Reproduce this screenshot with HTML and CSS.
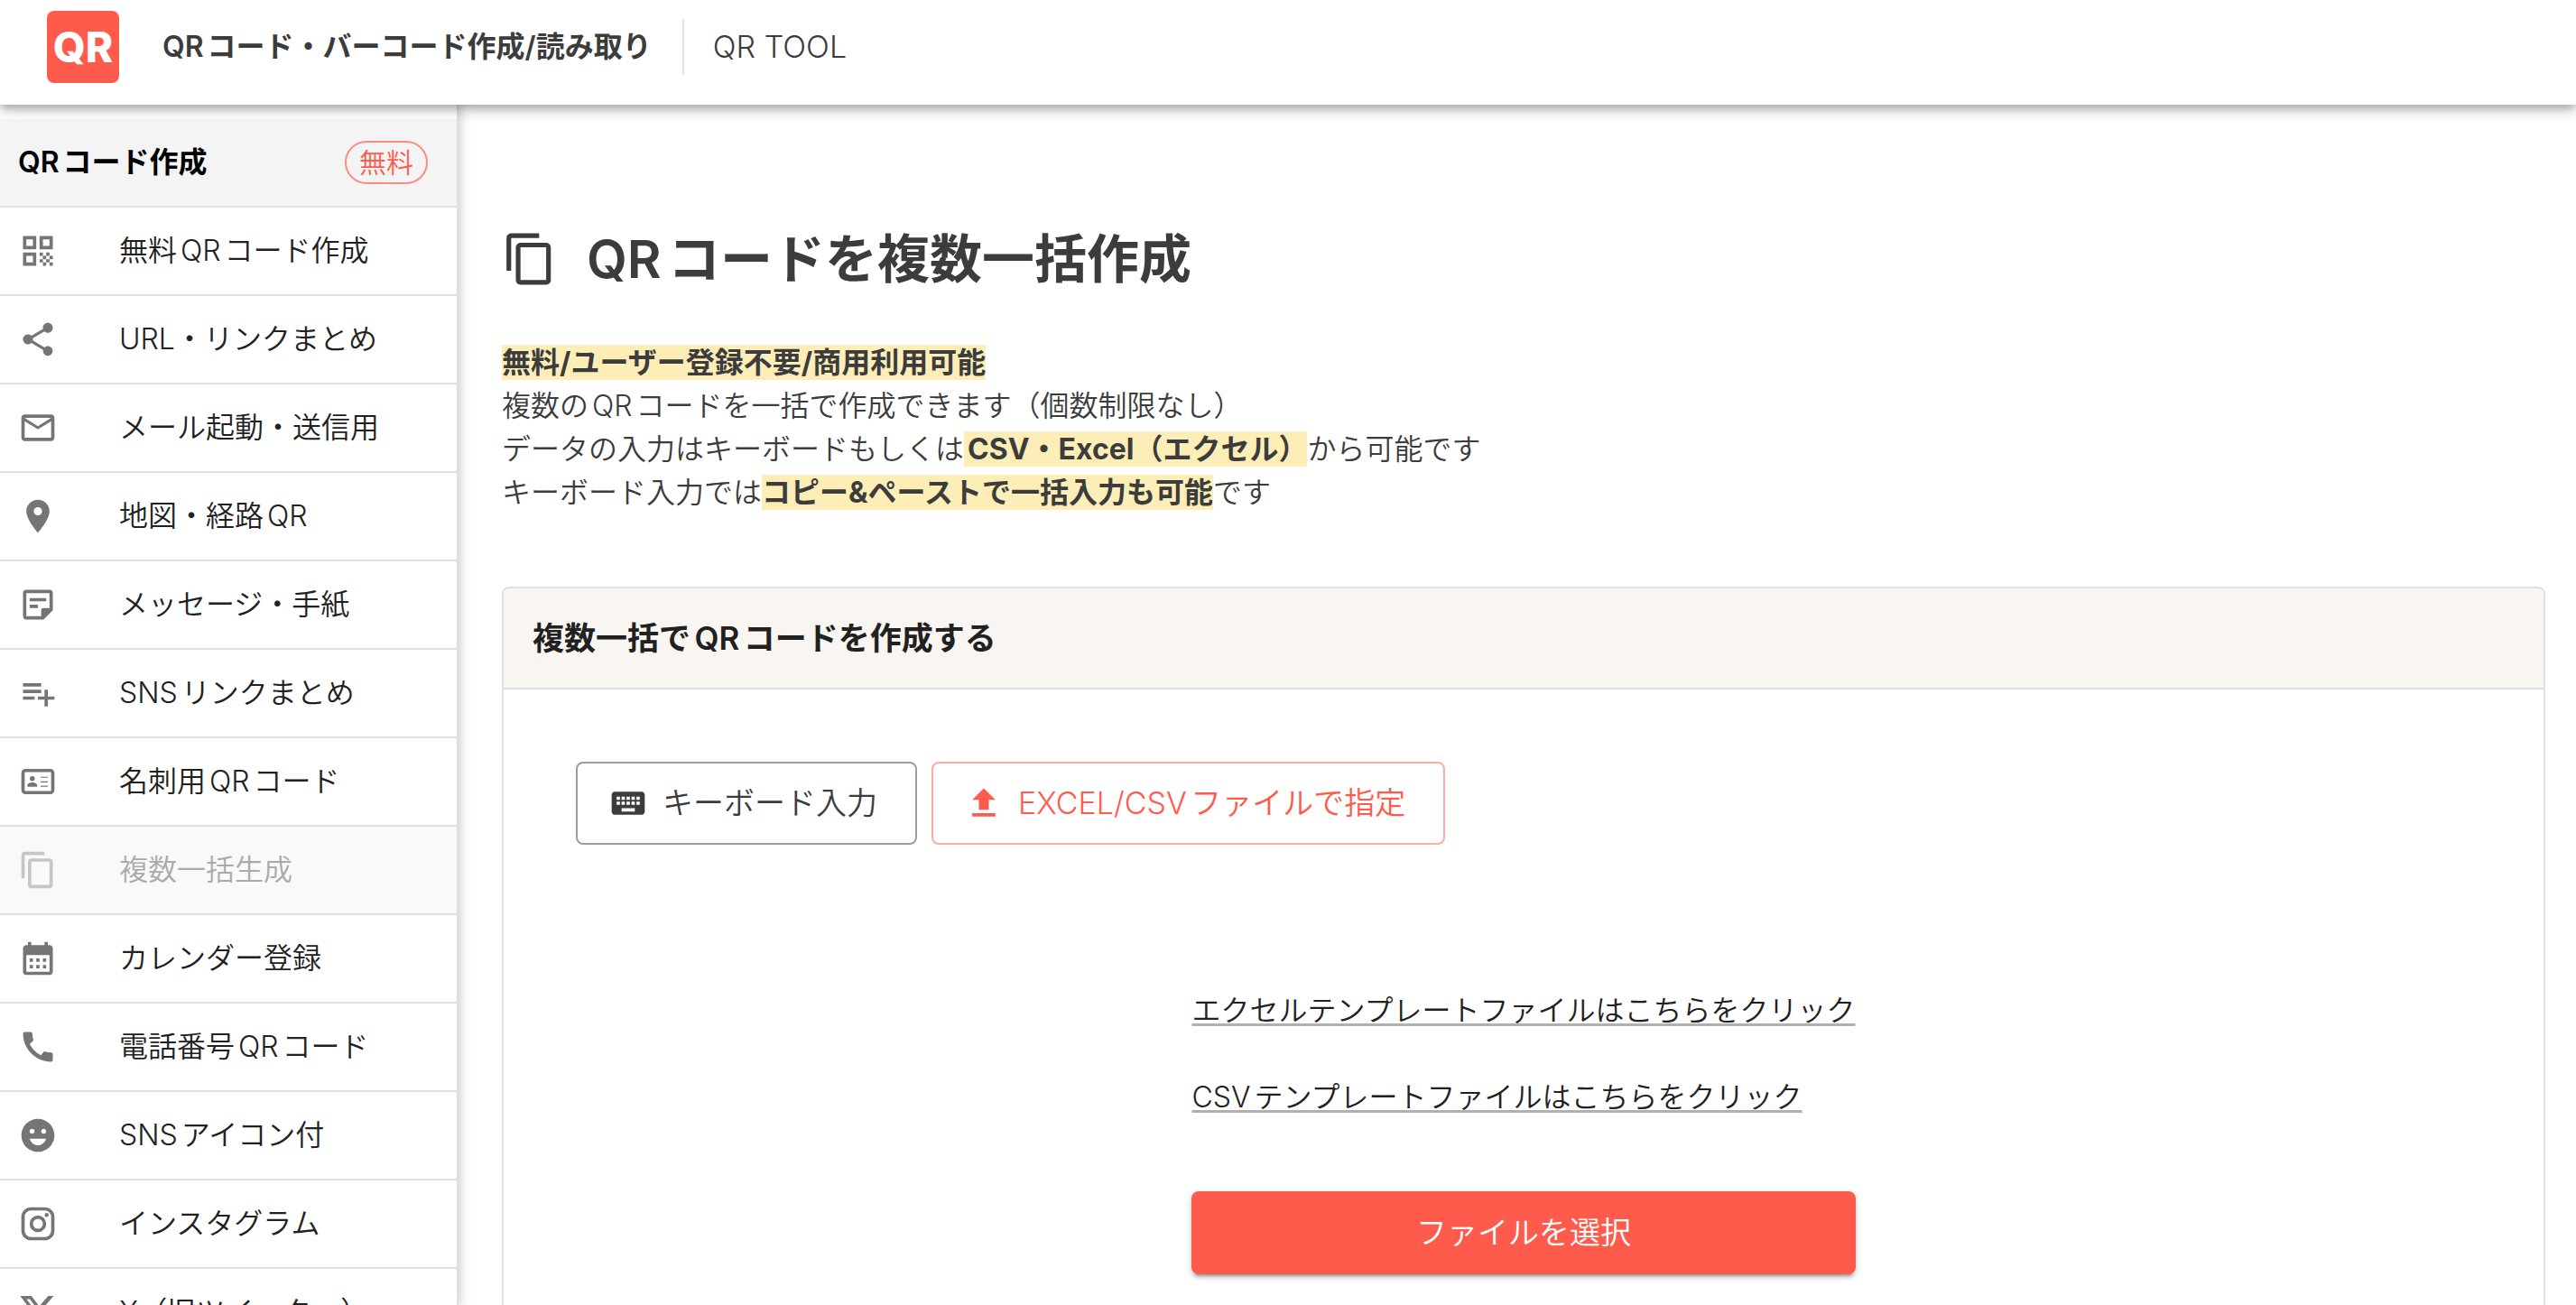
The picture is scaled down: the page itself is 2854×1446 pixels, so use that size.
FILE: index.html
```html
<!DOCTYPE html>
<html lang="ja">
<head>
  <meta charset="UTF-8">
  <meta name="viewport" content="width=device-width, initial-scale=1.0">
  <title>QRコードを複数一括作成 | QR TOOL</title>
  <link rel="stylesheet" href="styles.css">
</head>
<body>
  <header class="header">
    <a class="logo" href="#">QR</a>
    <a class="site-name" href="#">QRコード・バーコード作成/読み取り</a>
    <span class="site-sub">QR TOOL</span>
  </header>

  <div class="layout">
    <nav class="sidebar">
      <div class="sidebar-head">
        <span>QRコード作成</span>
        <span class="chip">無料</span>
      </div>
      <a class="nav-item" href="#">
        <svg class="icon" viewBox="0 0 24 24"><path d="M3 11h8V3H3v8zm2-6h4v4H5V5zM3 21h8v-8H3v8zm2-6h4v4H5v-4zM13 3v8h8V3h-8zm6 6h-4V5h4v4zM19 19h2v2h-2zM13 13h2v2h-2zM15 15h2v2h-2zM13 17h2v2h-2zM15 19h2v2h-2zM17 17h2v2h-2zM17 13h2v2h-2zM19 15h2v2h-2z"/></svg>
        無料QRコード作成
      </a>
      <a class="nav-item" href="#">
        <svg class="icon" viewBox="0 0 24 24"><path d="M18 16.08c-.76 0-1.44.3-1.96.77L8.91 12.7c.05-.23.09-.46.09-.7s-.04-.47-.09-.7l7.05-4.11c.54.5 1.25.81 2.04.81 1.66 0 3-1.34 3-3s-1.34-3-3-3-3 1.34-3 3c0 .24.04.47.09.7L8.04 9.81C7.5 9.31 6.79 9 6 9c-1.66 0-3 1.34-3 3s1.34 3 3 3c.79 0 1.5-.31 2.04-.81l7.12 4.16c-.05.21-.08.43-.08.65 0 1.61 1.31 2.92 2.92 2.92s2.92-1.31 2.92-2.92-1.31-2.92-2.92-2.92z"/></svg>
        URL・リンクまとめ
      </a>
      <a class="nav-item" href="#">
        <svg class="icon" viewBox="0 0 24 24"><path d="M20 4H4c-1.1 0-1.99.9-1.99 2L2 18c0 1.1.9 2 2 2h16c1.1 0 2-.9 2-2V6c0-1.1-.9-2-2-2zm0 14H4V8l8 5 8-5v10zm-8-7L4 6h16l-8 5z"/></svg>
        メール起動・送信用
      </a>
      <a class="nav-item" href="#">
        <svg class="icon" viewBox="0 0 24 24"><path d="M12 2C8.13 2 5 5.13 5 9c0 5.25 7 13 7 13s7-7.75 7-13c0-3.87-3.13-7-7-7zm0 9.5c-1.38 0-2.5-1.12-2.5-2.5s1.12-2.5 2.5-2.5 2.5 1.12 2.5 2.5-1.12 2.5-2.5 2.5z"/></svg>
        地図・経路QR
      </a>
      <a class="nav-item" href="#">
        <svg class="icon" viewBox="0 0 24 24"><path fill-rule="evenodd" d="M19 3H5a2 2 0 0 0-2 2v14a2 2 0 0 0 2 2h10.400L21 15.400V5a2 2 0 0 0-2-2zM5 19V5h14v9h-4a1 1 0 0 0-1 1v4H5zM7 8h10v2H7zM7 12h5v2H7z"/></svg>
        メッセージ・手紙
      </a>
      <a class="nav-item" href="#">
        <svg class="icon" viewBox="0 0 24 24"><path d="M14 10H3v2h11v-2zm0-4H3v2h11V6zm4 8v-4h-2v4h-4v2h4v4h2v-4h4v-2h-4zM3 16h7v-2H3v2z"/></svg>
        SNSリンクまとめ
      </a>
      <a class="nav-item" href="#">
        <svg class="icon" viewBox="0 0 24 24"><rect x="3" y="5.300" width="18" height="13.400" rx="1.500" fill="none" stroke="currentColor" stroke-width="2"/><circle cx="8.600" cy="10.200" r="1.500"/><path d="M5.600 15.200v-.8c0-1.200 1.500-1.900 3-1.900s3 .7 3 1.900v.8zM13.600 9.100h4.400v.6h-4.400zM13.600 11.900h4.400v.6h-4.400zM13.600 14.500h4.400v.6h-4.400z"/></svg>
        名刺用QRコード
      </a>
      <a class="nav-item is-current" href="#" aria-current="page">
        <svg class="icon" viewBox="0 0 24 24"><path d="M16 1H4c-1.100 0-2 .9-2 2v14h2V3h12V1zm3 4H8c-1.100 0-2 .9-2 2v14c0 1.100.9 2 2 2h11c1.100 0 2-.9 2-2V7c0-1.100-.9-2-2-2zm0 16H8V7h11v14z"/></svg>
        複数一括生成
      </a>
      <a class="nav-item" href="#">
        <svg class="icon" viewBox="0 0 24 24"><path d="M19 4h-1V2h-2v2H8V2H6v2H5c-1.110 0-1.990.9-1.990 2L3 20c0 1.100.89 2 2 2h14c1.100 0 2-.9 2-2V6c0-1.100-.9-2-2-2zm0 16H5V10h14v10zM9 14H7v-2h2v2zm4 0h-2v-2h2v2zm4 0h-2v-2h2v2zm-8 4H7v-2h2v2zm4 0h-2v-2h2v2zm4 0h-2v-2h2v2z"/></svg>
        カレンダー登録
      </a>
      <a class="nav-item" href="#">
        <svg class="icon" viewBox="0 0 24 24"><path d="M20.010 15.380c-1.230 0-2.420-.2-3.530-.56-.35-.12-.74-.03-1.010.24l-1.570 1.970c-2.830-1.350-5.480-3.900-6.890-6.830l1.950-1.660c.27-.28.35-.67.24-1.020-.37-1.110-.56-2.300-.56-3.530 0-.54-.45-.99-.99-.99H4.190C3.650 3 3 3.240 3 3.990 3 13.280 10.730 21 20.010 21c.71 0 .99-.63.99-1.180v-3.450c0-.54-.45-.99-.99-.99z"/></svg>
        電話番号QRコード
      </a>
      <a class="nav-item" href="#">
        <svg class="icon" viewBox="0 0 24 24"><path d="M11.990 2C6.470 2 2 6.480 2 12s4.470 10 9.990 10C17.520 22 22 17.520 22 12S17.520 2 11.990 2zM8.500 8c.83 0 1.500.67 1.500 1.500S9.330 11 8.500 11 7 10.330 7 9.500 7.670 8 8.500 8zM12 18c-2.280 0-4.220-1.660-5-4h10c-.78 2.340-2.720 4-5 4zm3.500-7c-.83 0-1.500-.67-1.500-1.500S14.670 8 15.500 8s1.500.67 1.500 1.500-.67 1.500-1.500 1.500z"/></svg>
        SNSアイコン付
      </a>
      <a class="nav-item" href="#">
        <svg class="icon" viewBox="0 0 24 24"><rect x="3" y="3" width="18" height="18" rx="4.800" fill="none" stroke="currentColor" stroke-width="2"/><circle cx="12" cy="12" r="4" fill="none" stroke="currentColor" stroke-width="2"/><circle cx="17.300" cy="6.700" r="1.200"/></svg>
        インスタグラム
      </a>
      <a class="nav-item" href="#">
        <svg class="icon" viewBox="0 0 24 24"><path d="M18.200 2.200h3.300l-7.200 8.300 8.500 11.200h-6.700l-5.200-6.800-6 6.800H1.700l7.700-8.800L1.300 2.200h6.800l4.700 6.200zM17 19.800h1.800L7.100 4.100h-2z"/></svg>
        X（旧ツイッター）
      </a>
    </nav>

    <main class="main">
      <h1 class="page-title">
        <svg class="icon-large" viewBox="0 0 24 24"><path d="M16 1H4c-1.100 0-2 .9-2 2v14h2V3h12V1zm3 4H8c-1.100 0-2 .9-2 2v14c0 1.100.9 2 2 2h11c1.100 0 2-.9 2-2V7c0-1.100-.9-2-2-2zm0 16H8V7h11v14z"/></svg>
        QRコードを複数一括作成
      </h1>
      <p class="lead">
        <strong>無料/ユーザー登録不要/商用利用可能</strong><br>
        複数のQRコードを一括で作成できます（個数制限なし）<br>
        データの入力はキーボードもしくは<strong>CSV・Excel（エクセル）</strong>から可能です<br>
        キーボード入力では<strong>コピー&amp;ペーストで一括入力も可能</strong>です
      </p>

      <section class="card">
        <h2 class="card-title">複数一括でQRコードを作成する</h2>
        <div class="card-body">
          <div class="input-types">
            <button class="btn" type="button">
              <svg class="icon" viewBox="0 0 24 24"><path d="M20 5H4c-1.100 0-1.990.9-1.990 2L2 17c0 1.100.9 2 2 2h16c1.100 0 2-.9 2-2V7c0-1.100-.9-2-2-2zm-9 3h2v2h-2V8zm0 3h2v2h-2v-2zM8 8h2v2H8V8zm0 3h2v2H8v-2zm-1 2H5v-2h2v2zm0-3H5V8h2v2zm9 7H8v-2h8v2zm0-4h-2v-2h2v2zm0-3h-2V8h2v2zm3 3h-2v-2h2v2zm0-3h-2V8h2v2z"/></svg>
              キーボード入力
            </button>
            <button class="btn btn-primary" type="button">
              <svg class="icon" viewBox="0 0 24 24"><path d="M9 16h6v-6h4l-7-7-7 7h4zm-4 2h14v2H5z"/></svg>
              EXCEL/CSVファイルで指定
            </button>
          </div>
          <div class="upload">
            <a class="template-link" href="#">エクセルテンプレートファイルはこちらをクリック</a>
            <a class="template-link" href="#">CSVテンプレートファイルはこちらをクリック</a>
            <button class="btn-upload" type="button">ファイルを選択</button>
          </div>
        </div>
      </section>
    </main>
  </div>
</body>
</html>
```
FILE: styles.css
```css
* {
  box-sizing: border-box;
}
body {
  display: flex;
  flex-direction: column;
  height: 100vh;
  margin: 0;
  overflow: hidden;
  font-family: Inter, "Noto Sans CJK JP", sans-serif;
  font-size: 32px;
  font-weight: 350;
  line-height: 48px;
  text-autospace: normal;
  color: #3c3c3c;
  background: #fff;
}
a {
  color: inherit;
  text-decoration: none;
}
button {
  font: inherit;
  cursor: pointer;
}
.icon {
  flex: none;
  width: 44px;
  height: 44px;
  fill: currentColor;
}

/* header */
.header {
  position: relative;
  z-index: 2;
  flex: none;
  display: flex;
  align-items: center;
  height: 116px;
  padding: 0 52px 12px;
  background: #fff;
  box-shadow: 0 4px 8px -2px rgba(0,0,0,0.2), 0 8px 10px rgba(0,0,0,0.14), 0 2px 20px rgba(0,0,0,0.12);
}
.logo {
  width: 80px;
  height: 80px;
  border-radius: 8px;
  background: #ff5b4d;
  color: #fff;
  font-size: 46px;
  font-weight: 800;
  line-height: 80px;
  text-align: center;
}
.site-name {
  margin-left: 48px;
  font-weight: 600;
}
.site-sub {
  margin-left: 34px;
  padding-left: 32px;
  border-left: 2px solid #e0e0e0;
  font-size: 34px;
  line-height: 62px;
}

/* sidebar */
.layout {
  flex: 1;
  display: flex;
  min-height: 0;
}
.sidebar {
  flex: none;
  width: 508px;
  padding-top: 16px;
  overflow: hidden;
  border-right: 2px solid #e0e0e0;
  box-shadow: 2px 0 12px rgba(0,0,0,0.2);
}
.sidebar-head {
  display: flex;
  align-items: center;
  justify-content: space-between;
  height: 98px;
  padding: 0 32px 0 20px;
  border-bottom: 2px solid #e0e0e0;
  background: #f4f4f4;
  color: #000;
  font-weight: 600;
}
.chip {
  padding: 0 14px;
  border: 2px solid #ff8c82;
  border-radius: 24px;
  color: #ff5b4d;
  font-size: 30px;
  font-weight: 350;
  line-height: 44px;
}
.nav-item {
  display: flex;
  align-items: center;
  gap: 68px;
  height: 98px;
  padding-left: 20px;
  border-bottom: 2px solid #e0e0e0;
  color: #212121;
}
.nav-item .icon {
  color: #757575;
}
.nav-item.is-current {
  background: #f9f9f9;
  color: #aaa;
}
.nav-item.is-current .icon {
  color: #c6c6c6;
}

/* main */
.main {
  flex: 1;
  min-width: 0;
  padding: 128px 34px 0 48px;
}
.page-title {
  display: flex;
  align-items: center;
  gap: 32px;
  margin: 0;
  font-size: 58px;
  font-weight: 600;
  line-height: 86px;
}
.icon-large {
  width: 62px;
  height: 62px;
  fill: currentColor;
}
.lead {
  margin: 48px 0 80px;
}
.lead strong {
  background: #fdeeb8;
  font-weight: 700;
}
.card {
  border: 2px solid #e0e0e0;
  border-radius: 8px;
  overflow: hidden;
}
.card-title {
  margin: 0;
  padding: 31px 32px;
  border-bottom: 2px solid #e0e0e0;
  background: #f9f6f1;
  color: #212121;
  font-size: 35px;
  font-weight: 600;
}
.card-body {
  padding: 80px;
  color: #212121;
}
.input-types {
  display: flex;
  gap: 16px;
}
.btn {
  display: flex;
  align-items: center;
  gap: 16px;
  height: 92px;
  padding: 0 42px 0 34px;
  border: 2px solid #9c9c9c;
  border-radius: 8px;
  background: #fff;
  color: #3c3c3c;
  font-size: 34px;
}
.btn-primary {
  border-color: #ffaca5;
  color: #ff5b4d;
}
.upload {
  display: flex;
  flex-direction: column;
  align-items: flex-start;
  gap: 48px;
  width: fit-content;
  margin: 160px auto 0;
}
.template-link {
  text-decoration: underline 3px #b0b0b0;
  text-underline-offset: 3px;
}
.btn-upload {
  align-self: stretch;
  height: 92px;
  margin-top: 32px;
  border: 0;
  border-radius: 8px;
  background: #ff5b4d;
  box-shadow: 0 6px 2px -4px rgba(0,0,0,0.2), 0 4px 4px rgba(0,0,0,0.14), 0 2px 10px rgba(0,0,0,0.12);
  color: #fff;
  font-size: 34px;
}
```
